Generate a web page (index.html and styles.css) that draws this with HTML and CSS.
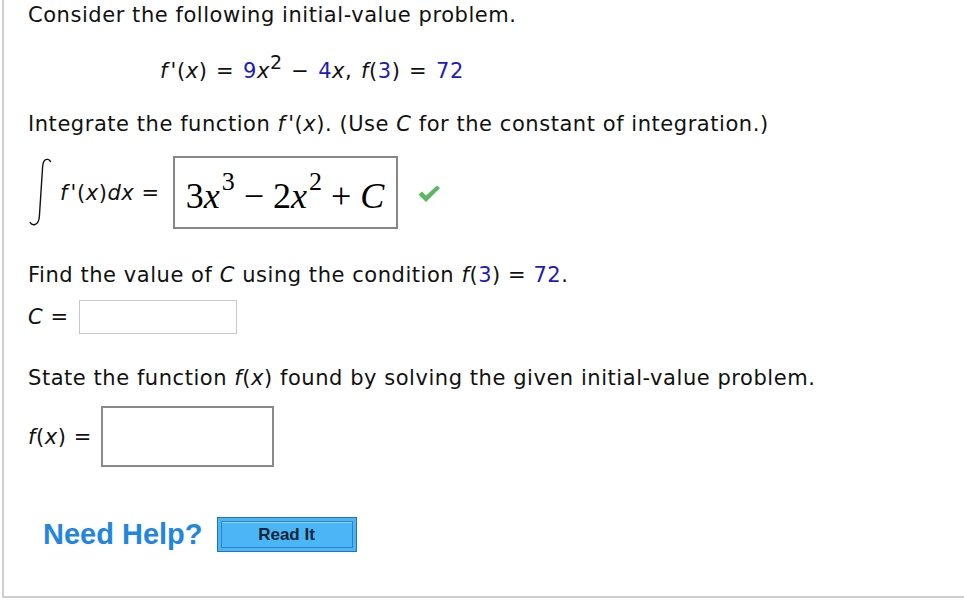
FILE: index.html
```html
<!DOCTYPE html>
<html>
<head>
<meta charset="utf-8">
<link rel="stylesheet" href="styles.css">
</head>
<body>
<div class="frame">
  <p class="line first">Consider the following initial-value problem.</p>
  <p class="line eq"><i>f</i>&#8202;'(<i>x</i>) = <span class="num">9</span><i>x</i><sup>2</sup> &minus; <span class="num">4</span><i>x</i>, <i>f</i>(<span class="num">3</span>) = <span class="num">72</span></p>
  <p class="line integ">Integrate the function <i>f</i>&#8202;'(<i>x</i>). (Use <i>C</i> for the constant of integration.)</p>
  <div class="row introw">
    <svg class="intsign" width="24" height="68" viewBox="0 0 24 68">
      <path d="M22.5 3.5 C21 1.2 18.5 0.8 17 2 C15.2 3.5 14.8 6 14.6 9 L11.4 58 C11.2 62 10.4 65.5 7 66.5 C4.8 67.1 3 66 2.2 64.6" fill="none" stroke="#111" stroke-width="1.4" stroke-linecap="round"/>
    </svg>
    <span class="lbl small"><i>f</i>&#8202;'(<i>x</i>)<i>d</i><i>x</i> =</span>
    <div class="mathbox"><span class="m">3<i>x</i><sup>3</sup><span class="op">&minus;</span>2<i>x</i><sup>2</sup><span class="op">+</span><i>C</i></span></div>
    <svg class="check" width="24" height="20" viewBox="0 0 24 20">
      <path d="M1.5 10.5 L5 7.5 L9 11.5 L20 1.5 L23 4 L9 18 Z" fill="#5cb860"/>
    </svg>
  </div>
  <p class="line find">Find the value of <i>C</i> using the condition <i>f</i>(<span class="num">3</span>) = <span class="num">72</span>.</p>
  <div class="row crow">
    <span class="lbl"><i>C</i> =</span>
    <div class="input light"></div>
  </div>
  <p class="line state">State the function <i>f</i>(<i>x</i>) found by solving the given initial-value problem.</p>
  <div class="row frow">
    <span class="lbl"><i>f</i>(<i>x</i>) =</span>
    <div class="input dark"></div>
  </div>
  <div class="row help">
    <span class="needhelp">Need Help?</span>
    <span class="readit"><span class="readit-inner">Read It</span></span>
  </div>
</div>
</body>
</html>
```
FILE: styles.css
```css
html, body {
  margin: 0;
  padding: 0;
  background: #fff;
}
body {
  font-family: "DejaVu Sans", Verdana, sans-serif;
  font-size: 21px;
  letter-spacing: 0.55px;
  color: #111;
}
.frame {
  box-sizing: border-box;
  height: 598px;
  margin-left: 2px;
  border-left: 2px solid #cfcfcf;
  border-bottom: 2px solid #cfcfcf;
  padding: 3px 0 0 24px;
}
.line {
  margin: 0;
  line-height: 24px;
  white-space: nowrap;
}
i { font-style: oblique; }
.num { color: #1c1cb8; }
sup {
  font-size: 17px;
  line-height: 0;
  vertical-align: 9px;
}
.eq { margin-top: 32px; padding-left: 132px; word-spacing: 1.5px; }
.eq sup { font-size: 19px; }
.integ { margin-top: 29px; }
.row { display: flex; align-items: center; }
.introw { margin-top: 20px; height: 73px; }
.intsign { margin-top: -2px; }
.small { margin-left: 8px; font-size: 21px; }
.mathbox {
  box-sizing: border-box;
  height: 73px;
  width: 225px;
  margin-left: 13px;
  border: 2px solid #878787;
  display: flex;
  align-items: center;
  padding-left: 11px;
}
.m {
  font-family: "Liberation Serif", "Times New Roman", serif;
  font-size: 36px;
  letter-spacing: 0;
  color: #000;
  padding-top: 6px;
}
.m i { font-style: italic; }
.m sup { font-size: 26px; vertical-align: 18px; margin-left: 2px; }
.op { margin: 0 9px; }
.check { margin-left: 19px; margin-top: 2px; }
.find { margin-top: 34px; }
.crow { margin-top: 13px; }
.lbl { white-space: nowrap; }
.input { box-sizing: border-box; }
.input.light {
  width: 158px;
  height: 34px;
  border: 1px solid #c8c8c8;
  margin-left: 10px;
}
.state { margin-top: 32px; }
.frow { margin-top: 16px; }
.input.dark {
  width: 173px;
  height: 61px;
  border: 2px solid #8a8a8a;
  margin-left: 9px;
}
.help { margin-top: 50px; padding-left: 15px; height: 35px; letter-spacing: 0; }
.needhelp {
  font-family: "Liberation Sans", Arial, sans-serif;
  font-weight: bold;
  font-size: 29px;
  color: #2286e0;
}
.readit {
  box-sizing: border-box;
  width: 140px;
  height: 35px;
  margin-left: 14px;
  border: 1px solid #2c6fb4;
  background: #4ab6f6;
  padding: 3px;
  display: flex;
}
.readit-inner {
  flex: 1;
  border: 1px solid #2f82c8;
  box-shadow: inset 0 1px 0 #8fd3ff;
  display: flex;
  align-items: center;
  justify-content: center;
  font-family: "Liberation Sans", Arial, sans-serif;
  font-weight: bold;
  font-size: 17px;
  color: #14253a;
}
```
